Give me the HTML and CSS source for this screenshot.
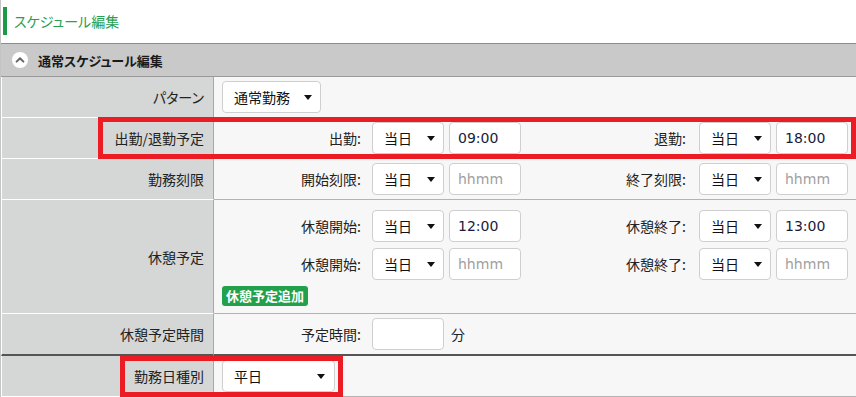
FILE: index.html
```html
<!DOCTYPE html>
<html lang="ja">
<head>
<meta charset="UTF-8">
<meta name="viewport" content="width=device-width, initial-scale=1.0">
<title>スケジュール編集</title>
<link rel="stylesheet" href="styles.css">
</head>
<body>
<div class="page">
    <h1 class="page-title">スケジュール編集</h1>

    <div class="section">
        <div class="section-head">
            <span class="toggle">
                <svg width="16" height="16" viewBox="0 0 16 16">
                    <circle cx="8" cy="8" r="8" fill="#fff"/>
                    <path d="M4.6 9.6 L8 6.3 L11.4 9.6" fill="none" stroke="#666" stroke-width="2" stroke-linecap="round" stroke-linejoin="round"/>
                </svg>
            </span>
            通常スケジュール編集
        </div>

        <div class="form-row">
            <div class="row-label">パターン</div>
            <div class="row-value">
                <div class="select w-pattern"><span>通常勤務</span><i class="caret"></i></div>
            </div>
        </div>

        <div class="form-row">
            <div class="row-label">出勤/退勤予定</div>
            <div class="row-value">
                <span class="fld-label">出勤:</span>
                <div class="select"><span>当日</span><i class="caret"></i></div>
                <input class="time" type="text" value="09:00" placeholder="hhmm">
                <span class="fld-label fld-right">退勤:</span>
                <div class="select"><span>当日</span><i class="caret"></i></div>
                <input class="time" type="text" value="18:00" placeholder="hhmm">
            </div>
        </div>

        <div class="form-row">
            <div class="row-label">勤務刻限</div>
            <div class="row-value">
                <span class="fld-label">開始刻限:</span>
                <div class="select"><span>当日</span><i class="caret"></i></div>
                <input class="time" type="text" placeholder="hhmm">
                <span class="fld-label fld-right">終了刻限:</span>
                <div class="select"><span>当日</span><i class="caret"></i></div>
                <input class="time" type="text" placeholder="hhmm">
            </div>
        </div>

        <div class="form-row">
            <div class="row-label">休憩予定</div>
            <div class="row-value stack">
                <div class="line">
                    <span class="fld-label">休憩開始:</span>
                    <div class="select"><span>当日</span><i class="caret"></i></div>
                    <input class="time" type="text" value="12:00" placeholder="hhmm">
                    <span class="fld-label fld-right">休憩終了:</span>
                    <div class="select"><span>当日</span><i class="caret"></i></div>
                    <input class="time" type="text" value="13:00" placeholder="hhmm">
                </div>
                <div class="line">
                    <span class="fld-label">休憩開始:</span>
                    <div class="select"><span>当日</span><i class="caret"></i></div>
                    <input class="time" type="text" placeholder="hhmm">
                    <span class="fld-label fld-right">休憩終了:</span>
                    <div class="select"><span>当日</span><i class="caret"></i></div>
                    <input class="time" type="text" placeholder="hhmm">
                </div>
                <button class="btn-add" type="button">休憩予定追加</button>
            </div>
        </div>

        <div class="form-row row-split">
            <div class="row-label">休憩予定時間</div>
            <div class="row-value">
                <span class="fld-label">予定時間:</span>
                <input class="time" type="text">
                <span class="unit">分</span>
            </div>
        </div>

        <div class="form-row">
            <div class="row-label">勤務日種別</div>
            <div class="row-value">
                <div class="select w-daytype"><span>平日</span><i class="caret"></i></div>
            </div>
        </div>
    </div>

    <!-- 注目箇所の赤枠 -->
    <div class="mark mark-time"></div>
    <div class="mark mark-daytype"></div>
</div>
</body>
</html>
```

FILE: styles.css
```css
body {
    margin: 0;
    padding: 0;
    background-color: #fff;
    font-family: "Noto Sans CJK JP", "Noto Sans", sans-serif;
    font-feature-settings: "palt";
    color: #222;
    overflow: hidden;
}

.page {
    position: relative;
    display: flow-root;
    border-left: 1px solid #c4c4c4;
    min-height: 397px;
}

.page-title {
    margin: 7px 0 8px 2px;
    padding-left: 7px;
    border-left: 4px solid #1d9a48;
    height: 28px;
    line-height: 28px;
    font-size: 14px;
    font-weight: normal;
    color: #27a04f;
}

.section-head {
    display: flex;
    align-items: center;
    height: 32px;
    padding-left: 11px;
    background-color: #c9c9c9;
    border-top: 1px solid #8c8c8c;
    border-bottom: 1px solid #9a9a9a;
    font-size: 13px;
    font-weight: bold;
    color: #1a1a1a;
}

.toggle {
    display: flex;
    margin-right: 10px;
}

.form-row {
    display: grid;
    grid-template-columns: 213px 1fr;
}

.row-label {
    display: flex;
    align-items: center;
    justify-content: flex-end;
    padding-right: 9px;
    background-color: #d5d6d6;
    border-left: 1px solid #fff;
    border-right: 1px solid #a8a8a8;
    border-bottom: 1px solid #fff;
    font-size: 14px;
}

.row-value {
    display: flex;
    align-items: center;
    height: 41px;
    box-sizing: border-box;
    padding: 4px 8px 4px 8px;
    background-color: #f7f7f7;
    border-bottom: 1px solid #b3b3b3;
    font-size: 14px;
}

.row-value.stack {
    flex-direction: column;
    align-items: stretch;
    height: 114px;
    padding-top: 10px;
    padding-bottom: 6px;
    gap: 6px;
}

.line {
    display: flex;
    align-items: center;
}

.row-split .row-label,
.row-split .row-value {
    border-bottom: 2px solid #555;
}

.row-split .row-value {
    height: 42px;
}

.fld-label {
    flex: none;
    width: 150px;
    box-sizing: border-box;
    padding-right: 11px;
    text-align: right;
}

.fld-label.fld-right {
    width: auto;
    flex: 1;
    padding-right: 13px;
}

.select {
    flex: none;
    display: flex;
    align-items: center;
    justify-content: space-between;
    width: 72px;
    height: 32px;
    box-sizing: border-box;
    padding: 0 8px 0 11px;
    background-color: #fff;
    border: 1px solid #cfcfcf;
    border-radius: 4px;
    font-size: 14px;
    color: #111;
}

.select.w-pattern {
    width: 99px;
}

.select.w-daytype {
    width: 113px;
    padding-right: 9px;
}

.caret {
    width: 0;
    height: 0;
    border-left: 4px solid transparent;
    border-right: 4px solid transparent;
    border-top: 5px solid #111;
}

.time {
    flex: none;
    width: 72px;
    height: 32px;
    box-sizing: border-box;
    margin: 0 0 0 5px;
    padding: 0 8px;
    background-color: #fff;
    border: 1px solid #cfcfcf;
    border-radius: 4px;
    font-family: "DejaVu Sans", sans-serif;
    font-size: 14px;
    color: #1a1a3a;
    outline: none;
}

.row-split .time {
    margin-left: 0;
}

.time::placeholder {
    color: #a0a0a0;
}

.unit {
    margin-left: 7px;
}

.btn-add {
    align-self: flex-start;
    height: 20px;
    padding: 0 4px;
    background-color: #22a04b;
    border: none;
    border-radius: 3px;
    color: #fff;
    font-family: "Noto Sans CJK JP", sans-serif;
    font-feature-settings: "palt";
    font-size: 13px;
    font-weight: bold;
    line-height: 20px;
    cursor: pointer;
}

.mark {
    position: absolute;
    box-sizing: border-box;
    border: 5px solid #ec1c24;
}

.mark-time {
    left: 97px;
    top: 117px;
    width: 758px;
    height: 42px;
}

.mark-daytype {
    left: 119px;
    top: 356px;
    width: 223px;
    height: 41px;
}
```
